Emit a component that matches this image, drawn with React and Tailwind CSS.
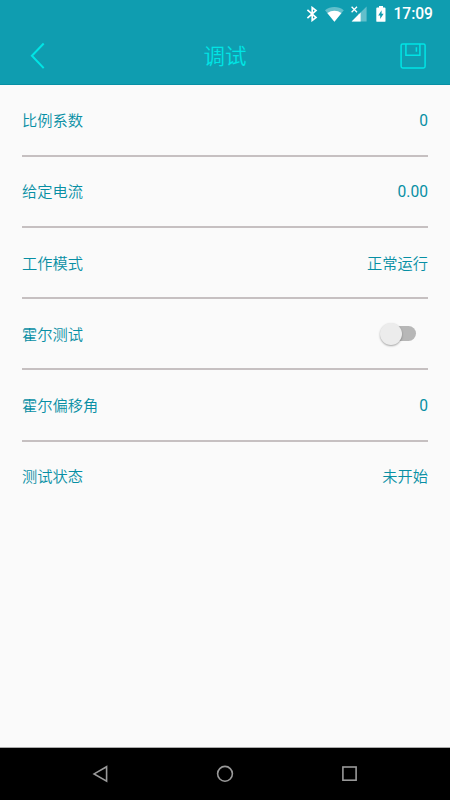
import { useState } from 'react';

const ROWS = [
  { id: 'ratio', label: '比例系数', value: '0', numeric: true },
  { id: 'current', label: '给定电流', value: '0.00', numeric: true },
  { id: 'mode', label: '工作模式', value: '正常运行' },
  { id: 'hall', label: '霍尔测试', toggle: true },
  { id: 'offset', label: '霍尔偏移角', value: '0', numeric: true },
  { id: 'status', label: '测试状态', value: '未开始' },
];

function StatusBar() {
  return (
    <div className="flex h-[27px] items-center justify-end pr-[17px] text-white">
      <svg className="mr-[7px] h-4 w-3" viewBox="0 0 12 16" fill="none" stroke="currentColor" strokeWidth="1.7">
        <path d="M1.4 3.8 10 11.4 6.2 14.4V1.6L10 4.6 1.4 12.2" />
      </svg>
      <svg className="mr-[7px] h-4 w-[19px]" viewBox="0 0 19 16" fill="currentColor">
        <path d="M0 4.2C5.4-.2 13.4-.2 18.8 4.2L9.4 15.8z" opacity=".35" />
        <path d="M2.3 7.1c4.3-3.3 9.9-3.3 14.2 0L9.4 15.8z" />
      </svg>
      <svg className="mr-[9px] h-4 w-4" viewBox="0 0 16 16" fill="currentColor">
        <path d="M15.6.4v15H.6L7 9V7.8h2V7z" opacity=".35" />
        <path d="M9.6 6.4v9h-9z" />
        <path d="m.6.8 5.4 5.4M6 .8.6 6.2" stroke="currentColor" strokeWidth="1.3" />
      </svg>
      <svg className="mr-[7.5px] h-4 w-[10px]" viewBox="0 0 10 16">
        <path d="M3 0h4v1.6h1.6q.9 0 .9.9v12.4q0 .9-.9.9H1.2q-.9 0-.9-.9V2.5q0-.9.9-.9H3z" fill="currentColor" />
        <path d="M5.6 4.2v3.6h2L4.2 13V9.4h-2z" fill="#0f9db0" />
      </svg>
      <span className="pt-[3px] text-[15.6px] leading-none font-medium">17:09</span>
    </div>
  );
}

function Header() {
  return (
    <header className="h-[85px] border-b border-[#078fa4] bg-[#0f9db0]">
      <StatusBar />
      <div className="grid h-[57px] grid-cols-[1fr_auto_1fr] items-center text-[#00e5e5]">
        <button type="button" aria-label="返回" className="ml-[30px] w-4">
          <svg className="h-7 w-4" viewBox="0 0 16 28" fill="none" stroke="currentColor" strokeWidth="2">
            <path d="M13.7 1.5 1.9 13.8 13.7 26.1" />
          </svg>
        </button>
        <h1 className="pt-[2px] text-[21.5px] leading-none font-[350]">调试</h1>
        <button type="button" aria-label="保存" className="mr-6 justify-self-end">
          <svg className="h-[26px] w-[26px]" viewBox="0 0 26 26" fill="none" stroke="currentColor" strokeWidth="1.5">
            <rect x="1.1" y=".9" width="24" height="24" rx="1.6" />
            <path d="M5.9 1v11.2h14V1M16.4 4.2v4.6" />
          </svg>
        </button>
      </div>
    </header>
  );
}

function Toggle({ on, onChange }) {
  return (
    <button
      type="button"
      role="switch"
      aria-checked={on}
      onClick={() => onChange(!on)}
      className="mr-3 mb-[3px] flex h-[15px] w-[34px] items-center rounded-full bg-[#b7b7b7]"
    >
      <span
        className={`h-[22px] w-[22px] shrink-0 rounded-full bg-[#ececec] shadow-[0_1px_2px_rgba(0,0,0,0.35)] ${
          on ? 'ml-3' : '-ml-[2px]'
        }`}
      />
    </button>
  );
}

function NavBar() {
  return (
    <nav className="flex h-[53px] items-center justify-between border-t border-[#aaa] bg-black px-[92px] text-[#999]">
      <svg className="h-[18px] w-4" viewBox="0 0 16 18" fill="none" stroke="currentColor" strokeWidth="1.6">
        <path d="M14.6 1.7v14.4L2.1 8.9z" />
      </svg>
      <svg className="h-[18px] w-[18px]" viewBox="0 0 18 18" fill="none" stroke="currentColor" strokeWidth="1.6">
        <circle cx="9" cy="8.8" r="7.4" />
      </svg>
      <svg className="h-4 w-4" viewBox="0 0 16 16" fill="none" stroke="currentColor" strokeWidth="1.6">
        <rect x=".9" y="1" width="13.2" height="13.2" />
      </svg>
    </nav>
  );
}

export default function App() {
  const [hall, setHall] = useState(false);

  return (
    <div className="flex h-[800px] w-[450px] flex-col bg-[#fafafa] font-[Roboto,'Noto_Sans_CJK_SC',sans-serif]">
      <Header />
      <main className="flex-1 px-[22px] pt-[0.4px]">
        {ROWS.map((row) => (
          <div
            key={row.id}
            className="flex h-[71.25px] items-center justify-between border-b-2 border-[#c6c0c1] pt-[3px] text-[15.25px] font-[350] text-[#078fa4] last:border-transparent"
          >
            <span>{row.label}</span>
            {row.toggle ? (
              <Toggle on={hall} onChange={setHall} />
            ) : (
              <span className={row.numeric ? 'text-[15.6px] font-normal' : ''}>{row.value}</span>
            )}
          </div>
        ))}
      </main>
      <NavBar />
    </div>
  );
}
